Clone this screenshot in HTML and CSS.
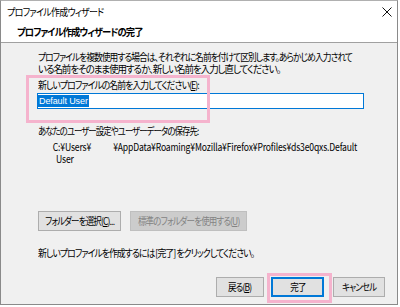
FILE: index.html
```html
<!DOCTYPE html>
<html lang="ja">
<head>
<meta charset="utf-8">
<link rel="stylesheet" href="styles.css">
</head>
<body>
<div class="window">
  <div class="titlebar">
    <span class="title">プロファイル作成ウィザード</span>
    <svg class="close" width="10" height="10" viewBox="0 0 10 10"><path d="M0.5 0.5 L9.5 9.5 M9.5 0.5 L0.5 9.5" stroke="#111" stroke-width="1" fill="none"/></svg>
  </div>
  <div class="header"><span class="head-text">プロファイル作成ウィザードの完了</span></div>
  <div class="content">
    <p class="line intro">プロファイルを複数使用する場合は、それぞれに名前を付けて区別します。あらかじめ入力されて</p>
    <p class="line intro2">いる名前をそのまま使用するか、新しい名前を入力し直してください。</p>
    <p class="line label">新しいプロファイルの名前を入力してください(<u>E</u>):</p>
    <div class="input"><span class="selected">Default User</span></div>
    <p class="line storage">あなたのユーザー設定やユーザーデータの保存先:</p>
    <p class="line path">C:¥Users¥<span class="blank"></span>¥AppData¥Roaming¥Mozilla¥Firefox¥Profiles¥ds3e0qxs.Default</p>
    <p class="line path path2">User</p>
    <div class="folder-row">
      <button class="btn folder"><span class="bt">フォルダーを選択(<u>C</u>)...</span></button>
      <button class="btn disabled std"><span class="bt">標準のフォルダーを使用する(<u>U</u>)</span></button>
    </div>
    <p class="line final">新しいプロファイルを作成するには [完了] をクリックしてください。</p>
    <div class="footer">
      <button class="btn back"><span class="bt">戻る(<u>B</u>)</span></button>
      <button class="btn default finish"><span class="bt">完了</span></button>
      <button class="btn cancel"><span class="bt">キャンセル</span></button>
    </div>
  </div>
  <div class="mark mark-name"></div>
  <div class="mark mark-finish"></div>
</div>
</body>
</html>
```
FILE: styles.css
```css
html, body {
  margin: 0;
  padding: 0;
  background: #ffffff;
}
body {
  font-family: "Noto Sans CJK JP", "Noto Sans", sans-serif;
  font-size: 10px;
  font-feature-settings: "palt" 1;
  color: #000;
}
.window {
  position: relative;
  width: 398px;
  height: 305px;
  border: 1px solid #8a8a8a;
  border-top-color: #b0b0b0;
  background: #f0f0f0;
  display: flex;
  flex-direction: column;
  box-sizing: border-box;
  overflow: hidden;
}
.titlebar {
  height: 21px;
  background: #fff;
  display: flex;
  align-items: center;
  justify-content: space-between;
  padding: 0 5px 0 6px;
}
.title {
  display: inline-block;
  font-size: 10px;
  letter-spacing: -0.8px;
  white-space: nowrap;
  transform: scaleX(0.9);
  transform-origin: 0 50%;
}
.close {
  margin-top: 1px;
}
.header {
  height: 20px;
  background: #fff;
  font-weight: bold;
  font-size: 10px;
  letter-spacing: -1px;
  line-height: 20px;
  padding-left: 16px;
  border-bottom: 1px solid #a0a0a0;
  white-space: nowrap;
}
.head-text {
  display: inline-block;
  transform: scaleX(0.93);
  transform-origin: 0 50%;
}
.content {
  flex: 1;
  padding: 8px 12px 0 37px;
  display: flex;
  flex-direction: column;
}
.line {
  margin: 0;
  line-height: 12px;
  height: 12px;
  white-space: nowrap;
  letter-spacing: -1.1px;
  transform-origin: 0 50%;
}
.intro {
  transform: scaleX(0.875);
}
.intro2 {
  transform: scaleX(0.95);
}
.label {
  margin-top: 4px;
  transform: scaleX(0.89);
}
.input {
  margin-top: 2px;
  margin-left: -1px;
  width: 327px;
  height: 16px;
  box-sizing: border-box;
  border: 1px solid #0078d7;
  background: #fff;
  padding: 1px 0 0 0;
  display: flex;
  align-items: flex-start;
}
.selected {
  background: #0078d7;
  color: #fff;
  font-family: "Liberation Sans", Arial, sans-serif;
  font-size: 9px;
  line-height: 12px;
  height: 12px;
  padding: 0 1px 0 1px;
  letter-spacing: -0.1px;
}
.storage {
  margin-top: 16px;
  transform: scaleX(0.84);
}
.path {
  margin-top: 4px;
  padding-left: 18px;
  letter-spacing: -0.2px;
  font-size: 10.5px;
  transform: scaleX(0.82);
}
.path2 {
  margin-top: 0;
  padding-left: 22px;
}
.blank {
  display: inline-block;
  width: 27px;
}
.folder-row {
  margin-top: 46px;
  display: flex;
  gap: 9px;
}
.btn {
  font-family: inherit;
  font-size: 10px;
  font-feature-settings: "palt" 1;
  letter-spacing: -1px;
  white-space: nowrap;
  height: 20px;
  padding: 0;
  margin: 0;
  background: #e1e1e1;
  border: 1px solid #adadad;
  color: #000;
  box-sizing: border-box;
  line-height: 16px;
  display: flex;
  align-items: center;
  justify-content: center;
  overflow: visible;
}
.bt {
  display: inline-block;
  transform: scaleX(0.85);
  transform-origin: 50% 50%;
}
.folder {
  width: 83px;
}
.std {
  width: 117px;
}
.disabled {
  background: #cccccc;
  border-color: #bfbfbf;
  color: #838383;
}
.final {
  margin-top: 16px;
  transform: scaleX(0.89);
}
.footer {
  margin-top: 18px;
  display: flex;
  justify-content: flex-end;
}
.back {
  width: 48px;
}
.finish {
  width: 53px;
  margin-left: 7px;
}
.cancel {
  width: 52px;
  margin-left: 9px;
}
.default {
  border: 2px solid #0078d7;
}
.mark {
  position: absolute;
  border: 3px solid #f5b3cd;
  box-sizing: border-box;
  pointer-events: none;
}
.mark-name {
  left: 25px;
  top: 74px;
  width: 184px;
  height: 48px;
}
.mark-finish {
  left: 266px;
  top: 272px;
  width: 65px;
  height: 30px;
}
```
